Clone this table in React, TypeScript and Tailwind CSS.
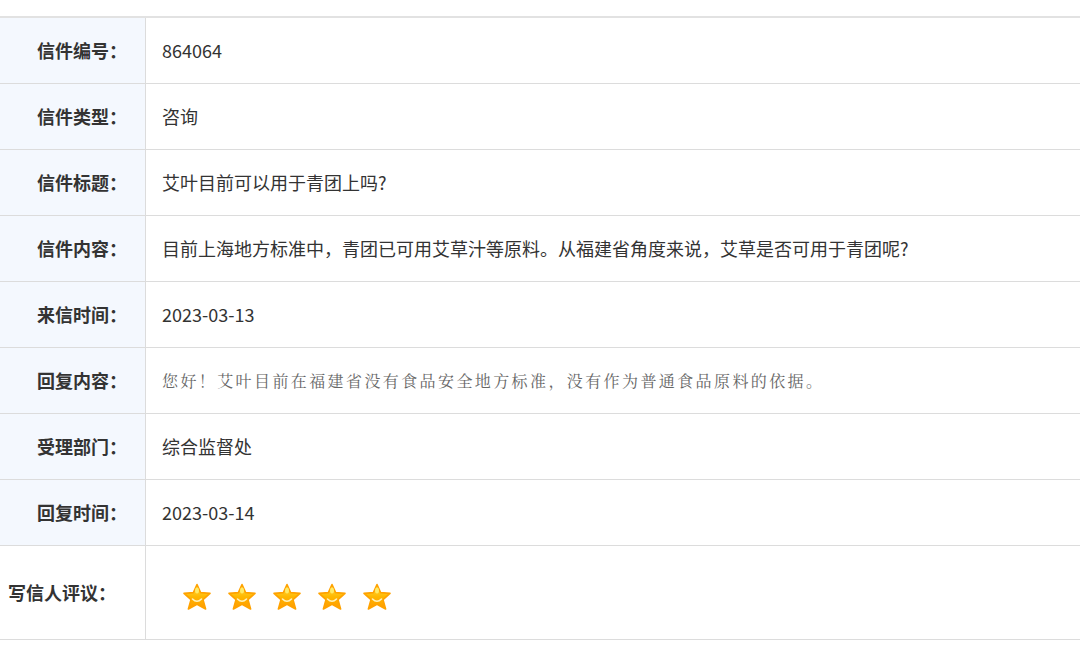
const rows = [
  { label: '信件编号：', value: '864064' },
  { label: '信件类型：', value: '咨询' },
  { label: '信件标题：', value: '艾叶目前可以用于青团上吗?' },
  { label: '信件内容：', value: '目前上海地方标准中，青团已可用艾草汁等原料。从福建省角度来说，艾草是否可用于青团呢?' },
  { label: '来信时间：', value: '2023-03-13' },
  { label: '回复内容：', value: '您好！艾叶目前在福建省没有食品安全地方标准，没有作为普通食品原料的依据。', reply: true },
  { label: '受理部门：', value: '综合监督处' },
  { label: '回复时间：', value: '2023-03-14' },
]

function Star() {
  return (
    <svg width="30" height="28" viewBox="0 0 30 28">
      <defs>
        <linearGradient id="starFill" x1="0" y1="0" x2="0" y2="1">
          <stop offset="0" stopColor="#ffe14a" />
          <stop offset="0.5" stopColor="#ffb800" />
          <stop offset="1" stopColor="#ff9a00" />
        </linearGradient>
      </defs>
      <path
        d="M15 1.5 L18.6 9.6 L28 10.4 L21 16.6 L23.6 26 L15 21.2 L6.4 26 L9 16.6 L2 10.4 L11.4 9.6 Z"
        fill="url(#starFill)"
        stroke="#ffa200"
        strokeWidth="1.6"
        strokeLinejoin="round"
      />
      <path d="M10.5 16 Q15 20.5 19.5 16" fill="none" stroke="#fff3c0" strokeWidth="1.6" strokeLinecap="round" />
      <ellipse cx="15" cy="7.5" rx="2" ry="3" fill="#fff27a" opacity="0.8" />
    </svg>
  )
}

export default function App() {
  return (
    <div className="w-[1080px] h-[645px] bg-white pt-[16px] font-['Microsoft_YaHei','Noto_Sans_CJK_SC',sans-serif] text-[#333]">
      <div className="border-t-2 border-[#e2e2e2]">
        {rows.map((row) => (
          <div key={row.label} className="flex h-[66px] border-b border-[#dcdcdc]">
            <div className="w-[146px] shrink-0 bg-[#f4f8fe] border-r border-[#dcdcdc] flex items-center justify-end pr-[18px] text-[18px] font-bold">
              {row.label}
            </div>
            <div
              className={
                row.reply
                  ? "flex items-center pl-[16px] text-[16px] tracking-[2.4px] text-[#666] font-['Noto_Serif_CJK_SC','Noto_Sans_CJK_SC',serif]"
                  : 'flex items-center pl-[16px] text-[18px]'
              }
            >
              {row.value}
            </div>
          </div>
        ))}
        <div className="flex h-[94px] border-b border-[#dcdcdc]">
          <div className="w-[146px] shrink-0 border-r border-[#dcdcdc] flex items-center pl-[8px] text-[18px] font-bold">
            写信人评议：
          </div>
          <div className="flex items-center gap-[15px] pl-[36px] pt-[8px]">
            {[0, 1, 2, 3, 4].map((i) => (
              <Star key={i} />
            ))}
          </div>
        </div>
      </div>
    </div>
  )
}
